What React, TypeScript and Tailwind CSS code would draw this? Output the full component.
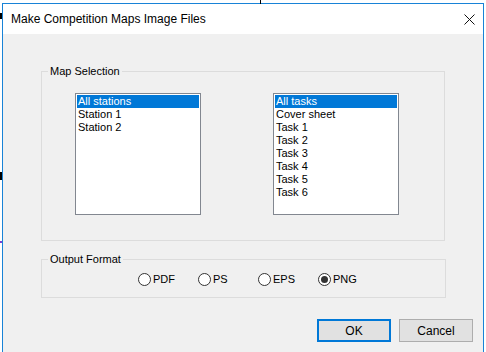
import { useState } from 'react'

const stations = ['All stations', 'Station 1', 'Station 2']
const tasks = ['All tasks', 'Cover sheet', 'Task 1', 'Task 2', 'Task 3', 'Task 4', 'Task 5', 'Task 6']
const formats = ['PDF', 'PS', 'EPS', 'PNG']

function ListBox({ items }: { items: string[] }) {
  const [selected, setSelected] = useState(0)
  return (
    <div className="w-[126px] h-[122px] border border-[#828790] bg-white p-px">
      {items.map((item, i) => (
        <div
          key={item}
          onClick={() => setSelected(i)}
          className={`h-[13px] leading-[13px] pl-px text-[11px] whitespace-nowrap ${
            i === selected ? 'bg-[#0078d7] text-white' : 'text-black'
          }`}
        >
          {item}
        </div>
      ))}
    </div>
  )
}

function GroupBox({ label, className, children }: { label: string; className: string; children: React.ReactNode }) {
  return (
    <div className={`relative border border-[#dcdcdc] ${className}`}>
      <span className="absolute left-[6px] top-[-8px] px-[2px] bg-[#f0f0f0] text-[11px] leading-[14px] text-black">
        {label}
      </span>
      {children}
    </div>
  )
}

export default function App() {
  const [format, setFormat] = useState('PNG')

  return (
    <div
      className="relative w-[486px] h-[352px] overflow-hidden bg-white pt-[3px] pl-[2px]"
      style={{ fontFamily: '"Liberation Sans", Arial, sans-serif' }}
    >
      {/* bits of the desktop behind the dialog */}
      <span className="absolute left-[260px] top-0 w-px h-[4px] bg-black" />
      <span className="absolute left-0 top-[13px] w-[2px] h-[6px] bg-black" />
      <span className="absolute left-0 top-[172px] w-[2px] h-[8px] bg-black" />
      <span className="absolute left-0 top-[241px] w-[2px] h-[2px] bg-[#7a3fd0]" />

      <div className="w-[482px] h-[349px] border-t border-l border-r border-[#1883d7] flex flex-col">
        {/* Title bar */}
        <div className="h-[30px] flex-none flex items-center justify-between bg-white">
          <span className="ml-[8px] text-[12px] text-black">Make Competition Maps Image Files</span>
          <svg width="11" height="11" viewBox="0 0 11 11" className="mr-[8px]">
            <path d="M0.5 0.5 L10.5 10.5 M10.5 0.5 L0.5 10.5" stroke="#111" strokeWidth="1" />
          </svg>
        </div>

        {/* Body */}
        <div className="flex-1 bg-[#f0f0f0] pl-[38px] pt-[37px]">
          <GroupBox label="Map Selection" className="w-[404px] h-[170px] pl-[33px] pt-[21px]">
            <div className="flex gap-[72px]">
              <ListBox items={stations} />
              <ListBox items={tasks} />
            </div>
          </GroupBox>

          <GroupBox label="Output Format" className="mt-[18px] w-[405px] h-[39px] pl-[96px] pt-[13px]">
            <div className="flex">
              {formats.map((f) => (
                <label key={f} onClick={() => setFormat(f)} className="w-[60px] flex items-center gap-[2px] text-[11px] leading-[13px] text-black">
                  <span className="w-[13px] h-[13px] rounded-full border border-[#333] bg-white flex items-center justify-center">
                    {format === f && <span className="w-[7px] h-[7px] rounded-full bg-[#333]" />}
                  </span>
                  {f}
                </label>
              ))}
            </div>
          </GroupBox>

          <div className="mt-[21px] mr-[10px] flex justify-end gap-[8px]">
            <button className="w-[74px] h-[23px] border-2 border-[#0078d7] bg-[#e1e1e1] text-[12px] text-black">OK</button>
            <button className="w-[74px] h-[23px] border border-[#adadad] bg-[#e1e1e1] text-[12px] text-black">Cancel</button>
          </div>
        </div>
      </div>
    </div>
  )
}
